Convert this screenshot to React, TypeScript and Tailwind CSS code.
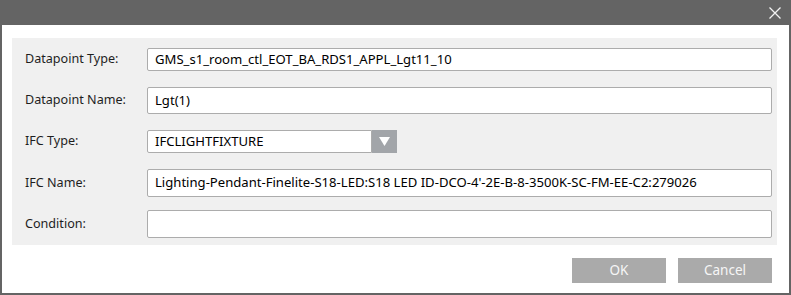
import React from 'react';

const font = { fontFamily: '"Noto Sans", "Open Sans", sans-serif' };

function Row({ label, children, className }: { label: string; children: React.ReactNode; className?: string }) {
  return (
    <div className={`flex items-center ${className ?? ''}`}>
      <label className="w-[122px] shrink-0 text-[12.6px] text-[#1e1e1e]">{label}</label>
      {children}
    </div>
  );
}

function TextBox({ value, h }: { value: string; h: string }) {
  return (
    <div className={`flex flex-1 items-center rounded-[2px] border border-[#acacac] bg-white pl-[7px] text-[13.1px] text-black ${h}`}>
      {value}
    </div>
  );
}

export default function App() {
  return (
    <div
      className="flex h-[295px] w-[791px] flex-col border-x-2 border-b-2 border-[#646464] bg-white"
      style={font}
    >
      {/* title bar */}
      <div className="flex h-[25px] shrink-0 items-center justify-end bg-[#646464] pr-[8px]">
        <svg width="12" height="12" viewBox="0 0 12 12" className="mt-[1px]">
          <path d="M0.5 0.5 L11.5 11.5 M11.5 0.5 L0.5 11.5" stroke="#f2f2f2" strokeWidth="1.3" fill="none" />
        </svg>
      </div>

      <div className="flex flex-1 flex-col pl-[10px] pr-[12px] pt-[13px]">
        <div className="flex flex-col bg-[#f0f0f0] pb-[7px] pl-[13px] pr-[5px] pt-[10px]">
          <Row label="Datapoint Type:">
            <TextBox value="GMS_s1_room_ctl_EOT_BA_RDS1_APPL_Lgt11_10" h="h-[23px]" />
          </Row>
          <Row label="Datapoint Name:" className="mt-[16px]">
            <TextBox value="Lgt(1)" h="h-[27px] items-start pt-[3px]" />
          </Row>
          <Row label="IFC Type:" className="mt-[16px]">
            <div className="flex h-[23px] w-[250px]">
              <div className="flex flex-1 items-center rounded-l-[2px] border border-[#acacac] bg-white pl-[7px] text-[13.1px] text-black">
                IFCLIGHTFIXTURE
              </div>
              <div className="flex w-[25px] items-center justify-center bg-[#a2a5a9]">
                <svg width="11" height="11" viewBox="0 0 11 11">
                  <path d="M0 1 L11 1 L5.5 10 Z" fill="#ffffff" />
                </svg>
              </div>
            </div>
          </Row>
          <Row label="IFC Name:" className="mt-[16px]">
            <TextBox value="Lighting-Pendant-Finelite-S18-LED:S18 LED ID-DCO-4'-2E-B-8-3500K-SC-FM-EE-C2:279026" h="h-[28px]" />
          </Row>
          <Row label="Condition:" className="mt-[13px]">
            <TextBox value="" h="h-[28px]" />
          </Row>
        </div>

        <div className="mt-[13px] flex justify-end gap-[12px] pr-[5px]">
          <button className="h-[25px] w-[94px] bg-[#aaaaaa] text-[13.5px] text-[#f6f6f6]">OK</button>
          <button className="h-[25px] w-[94px] bg-[#aaaaaa] text-[13.5px] text-[#f6f6f6]">Cancel</button>
        </div>
      </div>
    </div>
  );
}
